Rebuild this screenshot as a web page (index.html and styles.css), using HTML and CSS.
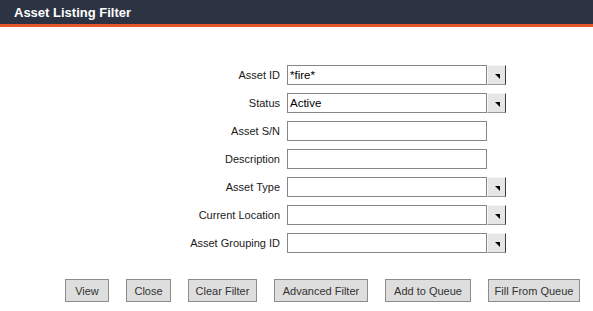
FILE: index.html
```html
<!DOCTYPE html>
<html lang="en">
<head>
  <meta charset="UTF-8" />
  <title>Asset Listing Filter</title>
  <link rel="stylesheet" href="styles.css">
</head>
<body>
  <div class="title-bar">Asset Listing Filter</div>

  <form class="filter-form">
    <label class="field-label" for="assetId">Asset ID</label>
    <div class="combo">
      <input type="text" id="assetId" value="*fire*" />
      <span class="combo-btn"><svg width="6" height="6" viewBox="0 0 6 6"><polygon points="0,0 6,0 6,6" fill="#000"/></svg></span>
    </div>

    <label class="field-label" for="status">Status</label>
    <div class="combo">
      <input type="text" id="status" value="Active" />
      <span class="combo-btn"><svg width="6" height="6" viewBox="0 0 6 6"><polygon points="0,0 6,0 6,6" fill="#000"/></svg></span>
    </div>

    <label class="field-label" for="serial">Asset S/N</label>
    <div class="combo">
      <input type="text" id="serial" />
    </div>

    <label class="field-label" for="desc">Description</label>
    <div class="combo">
      <input type="text" id="desc" />
    </div>

    <label class="field-label" for="assetType">Asset Type</label>
    <div class="combo">
      <input type="text" id="assetType" />
      <span class="combo-btn"><svg width="6" height="6" viewBox="0 0 6 6"><polygon points="0,0 6,0 6,6" fill="#000"/></svg></span>
    </div>

    <label class="field-label" for="location">Current Location</label>
    <div class="combo">
      <input type="text" id="location" />
      <span class="combo-btn"><svg width="6" height="6" viewBox="0 0 6 6"><polygon points="0,0 6,0 6,6" fill="#000"/></svg></span>
    </div>

    <label class="field-label" for="grouping">Asset Grouping ID</label>
    <div class="combo">
      <input type="text" id="grouping" />
      <span class="combo-btn"><svg width="6" height="6" viewBox="0 0 6 6"><polygon points="0,0 6,0 6,6" fill="#000"/></svg></span>
    </div>
  </form>

  <div class="actions">
    <button type="button" class="btn btn-view">View</button>
    <button type="button" class="btn btn-close">Close</button>
    <button type="button" class="btn btn-clear">Clear Filter</button>
    <button type="button" class="btn btn-advanced">Advanced Filter</button>
    <button type="button" class="btn btn-queue">Add to Queue</button>
    <button type="button" class="btn btn-fill">Fill From Queue</button>
  </div>
</body>
</html>
```

FILE: styles.css
```css
body {
  margin: 0;
  font-family: "Liberation Sans", Arial, sans-serif;
  font-size: 11px;
  color: #1a1a1a;
  background: #fff;
}

.title-bar {
  height: 24px;
  line-height: 26px;
  padding-left: 14px;
  background: #2c3443;
  border-bottom: 3px solid #e5562b;
  color: #fff;
  font-size: 13px;
  font-weight: 700;
}

.filter-form {
  display: grid;
  grid-template-columns: 280px auto;
  column-gap: 7px;
  row-gap: 8px;
  margin: 38px 0 0 0;
  align-items: center;
}

.field-label {
  text-align: right;
}

.combo {
  display: flex;
  height: 20px;
}

.combo input {
  width: 200px;
  height: 20px;
  margin: 0;
  padding: 0 2px;
  border: 1px solid #8a8686;
  box-sizing: border-box;
  font-family: inherit;
  font-size: 11.5px;
  color: #000;
}

.combo-btn {
  display: flex;
  align-items: center;
  justify-content: center;
  width: 19px;
  height: 20px;
  padding: 2px 0 0 2px;
  box-sizing: border-box;
  background: #e6e6e6;
  border-top: 1px solid #f6f6f6;
  border-left: 1px solid #f6f6f6;
  border-right: 1px solid #3c3c3c;
  border-bottom: 1px solid #9a9a9a;
}

.combo-btn svg {
  width: 5px;
  height: 5px;
}

.actions {
  display: flex;
  gap: 17px;
  margin: 26px 0 0 65px;
}

.btn {
  height: 23px;
  padding: 0;
  background: #dedede;
  border: 1px solid #8c8c8c;
  font-family: inherit;
  font-size: 11px;
  color: #333;
}

.btn-view { width: 44px; }
.btn-close { width: 45px; }
.btn-clear { width: 69px; }
.btn-advanced { width: 94px; }
.btn-queue { width: 86px; }
.btn-fill { width: 92px; }
```
